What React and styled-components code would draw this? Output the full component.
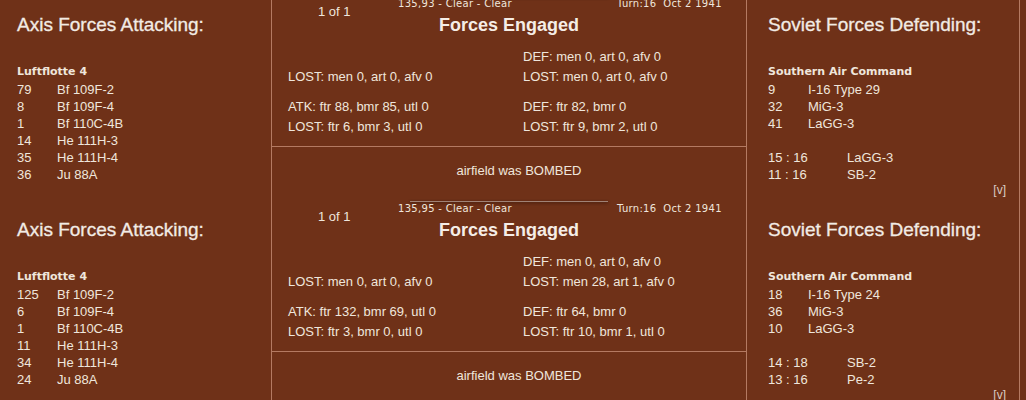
import styled, { createGlobalStyle } from 'styled-components';

const GlobalStyle = createGlobalStyle`
  html, body {
    margin: 0;
    padding: 0;
    background: #6f3118;
    overflow: hidden;
  }
  body {
    font-family: "Liberation Sans", Arial, sans-serif;
    color: #efe6dc;
  }
`;

const battles = [
    {
        location: "135,93 - Clear - Clear",
        turn: "Turn:16  Oct 2 1941",
        page: "1 of 1",
        axisHQ: "Luftflotte 4",
        axis: [["79", "Bf 109F-2"], ["8", "Bf 109F-4"], ["1", "Bf 110C-4B"], ["14", "He 111H-3"], ["35", "He 111H-4"], ["36", "Ju 88A"]],
        sovietHQ: "Southern Air Command",
        soviet: [["9", "I-16 Type 29"], ["32", "MiG-3"], ["41", "LaGG-3"]],
        ratios: [["15 : 16", "LaGG-3"], ["11 : 16", "SB-2"]],
        ground: [["", "DEF: men 0, art 0, afv 0"], ["LOST: men 0, art 0, afv 0", "LOST: men 0, art 0, afv 0"]],
        air: [["ATK: ftr 88, bmr 85, utl 0", "DEF: ftr 82, bmr 0"], ["LOST: ftr 6, bmr 3, utl 0", "LOST: ftr 9, bmr 2, utl 0"]],
        result: "airfield was BOMBED",
    },
    {
        location: "135,95 - Clear - Clear",
        turn: "Turn:16  Oct 2 1941",
        page: "1 of 1",
        axisHQ: "Luftflotte 4",
        axis: [["125", "Bf 109F-2"], ["6", "Bf 109F-4"], ["1", "Bf 110C-4B"], ["11", "He 111H-3"], ["34", "He 111H-4"], ["24", "Ju 88A"]],
        sovietHQ: "Southern Air Command",
        soviet: [["18", "I-16 Type 24"], ["36", "MiG-3"], ["10", "LaGG-3"]],
        ratios: [["14 : 18", "SB-2"], ["13 : 16", "Pe-2"]],
        ground: [["", "DEF: men 0, art 0, afv 0"], ["LOST: men 0, art 0, afv 0", "LOST: men 28, art 1, afv 0"]],
        air: [["ATK: ftr 132, bmr 69, utl 0", "DEF: ftr 64, bmr 0"], ["LOST: ftr 3, bmr 0, utl 0", "LOST: ftr 10, bmr 1, utl 0"]],
        result: "airfield was BOMBED",
    },
];

function Side({ title, hq, units, ratios, pad, last }) {
    return (
        <Column pad={pad} last={last}>
            <SideTitle>{title}</SideTitle>
            <Hq>{hq}</Hq>
            <Units>
                {units.map(([n, name], i) => (
                    <UnitRow key={i} numw={40}><span>{n}</span><span>{name}</span></UnitRow>
                ))}
                {ratios && <UnitRow numw={40} />}
                {ratios && ratios.map(([r, name], i) => (
                    <UnitRow key={"r" + i} numw={79}><span>{r}</span><span>{name}</span></UnitRow>
                ))}
            </Units>
            {last && <Toggle>[v]</Toggle>}
        </Column>
    );
}

function Battle({ b }) {
    return (
        <BattleRow>
            <Side title="Axis Forces Attacking:" hq={b.axisHQ} units={b.axis} pad={17} />
            <Center>
                <Engaged>
                    <Bar />
                    <Meta>
                        <PageNo>{b.page}</PageNo>
                        <Small>{b.location}</Small>
                        <Small>{b.turn}</Small>
                    </Meta>
                    <Title>Forces Engaged</Title>
                    <Stats>
                        {b.ground.map(([l, r], i) => (
                            <StatPair key={i}><span>{l}</span><span>{r}</span></StatPair>
                        ))}
                    </Stats>
                    <Stats gap={10}>
                        {b.air.map(([l, r], i) => (
                            <StatPair key={i}><span>{l}</span><span>{r}</span></StatPair>
                        ))}
                    </Stats>
                </Engaged>
                <Result>{b.result}</Result>
            </Center>
            <Side title="Soviet Forces Defending:" hq={b.sovietHQ} units={b.soviet} ratios={b.ratios} pad={21} last />
        </BattleRow>
    );
}

export default function App() {
    return (
        <>
            <GlobalStyle />
            <Page>
                {battles.map((b, i) => <Battle key={i} b={b} />)}
            </Page>
        </>
    );
}

const Page = styled.div`
margin-top: -10px;
width: 1026px;
`

const BattleRow = styled.div`
display: grid;
grid-template-columns: 271px 476px 273px;
height: 205px;
`

const Column = styled.div`
position: relative;
padding: 24px 0 0 ${props => props.pad}px;
border-right: ${props => props.last ? "1px solid #b47a62" : "none"};
`

const SideTitle = styled.div`
font-size: 19px;
line-height: 22px;
color: #f2ebe4;
white-space: nowrap;
-webkit-text-stroke: 0.3px #f2ebe4;
`

const Hq = styled.div`
margin-top: 27px;
font-family: "DejaVu Sans", Verdana, sans-serif;
font-weight: bold;
font-size: 11px;
line-height: 17px;
`

const Units = styled.div`
margin-top: 1px;
`

const UnitRow = styled.div`
display: grid;
grid-template-columns: ${props => props.numw}px auto;
height: 17px;
font-size: 13px;
line-height: 17px;
`

const Toggle = styled.span`
position: absolute;
right: 13px;
bottom: -2px;
font-size: 12px;
line-height: 14px;
color: #d9cbc2;
`

const Center = styled.div`
border-left: 1px solid #b47a62;
border-right: 1px solid #b47a62;
display: flex;
flex-direction: column;
`

const Engaged = styled.div`
height: 156px;
border-bottom: 1px solid #b47a62;
`

const Bar = styled.div`
width: 198px;
height: 1px;
margin: 6px auto 0;
background: #a08276;
box-shadow: 0 1px 3px rgba(30, 10, 4, 0.8);
`

const Meta = styled.div`
display: grid;
grid-template-columns: 126px 219px auto;
grid-template-rows: 12px;
margin-top: 1px;
`

const PageNo = styled.span`
padding-left: 46px;
margin-top: 6px;
font-size: 13px;
line-height: 15px;
`

const Small = styled.span`
font-family: "DejaVu Sans", Verdana, sans-serif;
font-size: 10px;
line-height: 12px;
letter-spacing: 0.3px;
white-space: pre;
`

const Title = styled.div`
margin-top: 4px;
text-align: center;
font-size: 18px;
font-weight: bold;
line-height: 22px;
color: #f5ede6;
`

const Stats = styled.div`
margin-top: ${props => props.gap || 11}px;
padding-left: 16px;
`

const StatPair = styled.div`
display: grid;
grid-template-columns: 235px auto;
font-size: 13px;
line-height: 20px;
white-space: nowrap;
`

const Result = styled.div`
flex: 1;
padding: 14px 0 0 20px;
text-align: center;
font-size: 13px;
line-height: 20px;
`
